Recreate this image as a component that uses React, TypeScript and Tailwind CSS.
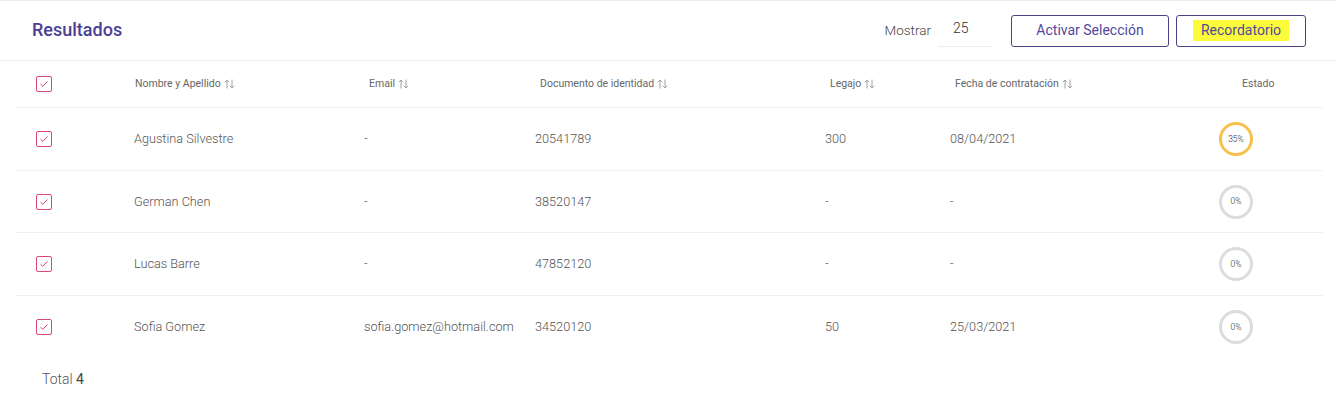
import React from "react";

const SortIcon = () => (
  <svg width="11" height="10" viewBox="0 0 11 10" className="inline-block ml-[3px] -mt-[1px]" fill="none" stroke="#a0a0a0" strokeWidth="1">
    <path d="M3 9.5V1M0.8 3.2L3 1l2.2 2.2" />
    <path d="M8 0.5V9M5.8 6.8L8 9l2.2-2.2" />
  </svg>
);

const Check = () => (
  <div className="w-4 h-4 border border-[#d9477c] rounded-[2px] flex items-center justify-center">
    <svg width="10" height="8" viewBox="0 0 10 8" fill="none" stroke="#d9477c" strokeWidth="1">
      <path d="M1.5 4.2L3.8 6.3L8.5 1.5" />
    </svg>
  </div>
);

const Progress = ({ value }: { value: number }) => (
  <div
    className={`w-[34px] h-[34px] rounded-full border-[3px] flex items-center justify-center text-[8.5px] font-light text-[#333] ${
      value > 0 ? "border-[#f6c04a]" : "border-[#dcdcdc]"
    }`}
  >
    {value}%
  </div>
);

const rows = [
  { name: "Agustina Silvestre", email: "-", doc: "20541789", legajo: "300", fecha: "08/04/2021", pct: 35 },
  { name: "German Chen", email: "-", doc: "38520147", legajo: "-", fecha: "-", pct: 0 },
  { name: "Lucas Barre", email: "-", doc: "47852120", legajo: "-", fecha: "-", pct: 0 },
  { name: "Sofia Gomez", email: "sofia.gomez@hotmail.com", doc: "34520120", legajo: "50", fecha: "25/03/2021", pct: 0 },
];

const cols = "grid grid-cols-[119px_230px_171px_290px_125px_250px_123px]";

export default function App() {
  return (
    <div className="w-[1336px] h-[399px] bg-white border-t border-[#ececec] font-['Roboto',sans-serif] text-[#666]">
      <div className="h-[60px] flex items-center border-b border-[#ececec] pl-8 pr-[30px]">
        <h1 className="text-[18px] font-medium text-[#4b3e93] leading-none -mt-[1px]">Resultados</h1>
        <div className="ml-auto flex items-center">
          <span className="text-[13.5px] font-light text-[#444]">Mostrar</span>
          <div className="ml-[7px] w-[55px] h-[32px] border-b border-[#ececec] pl-[15px] pb-[4px] flex items-center text-[14px] font-light text-[#333]">25</div>
          <button className="ml-[18px] w-[158px] h-[32px] border border-[#4a4283] rounded-[3px] text-[14px] text-[#52489c] bg-white">
            Activar Selección
          </button>
          <button className="ml-[7px] w-[130px] h-[32px] border border-[#4a4283] rounded-[3px] text-[14px] text-[#52489c] bg-white flex items-center justify-center">
            <span className="bg-[#fcfc3a] px-[8px] py-[3px] leading-[15px]">Recordatorio</span>
          </button>
        </div>
      </div>

      <div className="ml-[15px] mr-[13px]">
        <div className={`${cols} h-[47px] items-center border-b border-[#f0f0f0] text-[10.5px] text-[#666]`}>
          <div className="pl-[21px]"><Check /></div>
          <div className="pl-[1px]">Nombre y Apellido<SortIcon /></div>
          <div className="pl-[5px]">Email<SortIcon /></div>
          <div className="pl-[5px]">Documento de identidad<SortIcon /></div>
          <div className="pl-[5px]">Legajo<SortIcon /></div>
          <div className="pl-[5px]">Fecha de contratación<SortIcon /></div>
          <div className="pl-[42px]">Estado</div>
        </div>
        {rows.map((r, i) => (
          <div
            key={r.name}
            className={`${cols} ${i % 2 === 0 ? "h-[63px]" : "h-[62px]"} items-center text-[12.7px] font-light text-[#555] ${i < rows.length - 1 ? "border-b border-[#f0f0f0]" : ""}`}
          >
            <div className="pl-[21px]"><Check /></div>
            <div>{r.name}</div>
            <div>{r.email}</div>
            <div>{r.doc}</div>
            <div>{r.legajo}</div>
            <div>{r.fecha}</div>
            <div className="pl-[19px]"><Progress value={r.pct} /></div>
          </div>
        ))}
      </div>
      <div className="pl-[42px] pt-[11px] text-[14px] font-light text-[#555]">
        Total <span className="font-normal text-[#444]">4</span>
      </div>
    </div>
  );
}
